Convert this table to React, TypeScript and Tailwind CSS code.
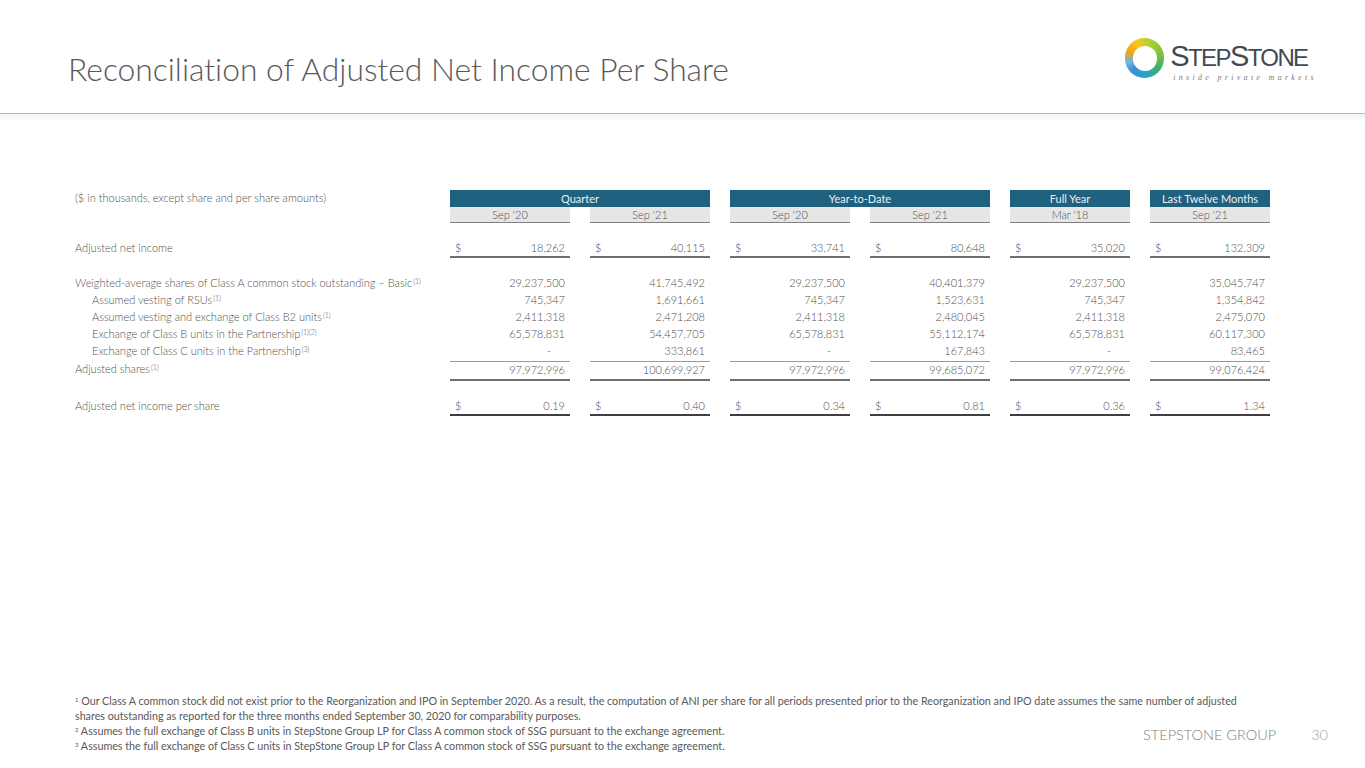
import React from "react";

type Row = {
  label: React.ReactNode;
  values: string[];
  indent?: boolean;
  dollar?: boolean;
  kind?: "plain" | "total" | "grand" | "final";
  height: string;
  top?: string;
};

const Sup = ({ children }: { children: React.ReactNode }) => (
  <sup className="text-[7px] ml-[1px]">{children}</sup>
);

const rows: Row[] = [
  {
    label: "Adjusted net income",
    values: ["18,262", "40,115", "33,741", "80,648", "35,020", "132,309"],
    dollar: true,
    kind: "grand",
    height: "h-[16px]",
    top: "mt-[16px]",
  },
  {
    label: (
      <>
        Weighted-average shares of Class A common stock outstanding – Basic<Sup>(1)</Sup>
      </>
    ),
    values: ["29,237,500", "41,745,492", "29,237,500", "40,401,379", "29,237,500", "35,045,747"],
    height: "h-[17px]",
    top: "mt-[17px]",
  },
  {
    label: (
      <>
        Assumed vesting of RSUs<Sup>(1)</Sup>
      </>
    ),
    values: ["745,347", "1,691,661", "745,347", "1,523,631", "745,347", "1,354,842"],
    indent: true,
    height: "h-[17px]",
  },
  {
    label: (
      <>
        Assumed vesting and exchange of Class B2 units<Sup>(1)</Sup>
      </>
    ),
    values: ["2,411,318", "2,471,208", "2,411,318", "2,480,045", "2,411,318", "2,475,070"],
    indent: true,
    height: "h-[17px]",
  },
  {
    label: (
      <>
        Exchange of Class B units in the Partnership<Sup>(1)(2)</Sup>
      </>
    ),
    values: ["65,578,831", "54,457,705", "65,578,831", "55,112,174", "65,578,831", "60,117,300"],
    indent: true,
    height: "h-[17px]",
  },
  {
    label: (
      <>
        Exchange of Class C units in the Partnership<Sup>(3)</Sup>
      </>
    ),
    values: ["-", "333,861", "-", "167,843", "-", "83,465"],
    indent: true,
    height: "h-[17px]",
  },
  {
    label: (
      <>
        Adjusted shares<Sup>(1)</Sup>
      </>
    ),
    values: ["97,972,996", "100,699,927", "97,972,996", "99,685,072", "97,972,996", "99,076,424"],
    kind: "total",
    height: "h-[17px]",
    top: "mt-[1px]",
  },
  {
    label: "Adjusted net income per share",
    values: ["0.19", "0.40", "0.34", "0.81", "0.36", "1.34"],
    dollar: true,
    kind: "final",
    height: "h-[15px]",
    top: "mt-[18px]",
  },
];

const grid = "grid grid-cols-[355px_repeat(6,120px)] gap-x-[20px]";

const cellBorder = (kind?: Row["kind"]) => {
  if (kind === "grand") return "border-b-2 border-[#707070]";
  if (kind === "total") return "border-t border-b-2 border-t-[#9a9a9a] border-b-[#6e6e6e]";
  if (kind === "final") return "border-b-2 border-[#3f3f3f]";
  return "";
};

const Logo = () => (
  <div className="flex items-start gap-[6px] pt-[38px]">
    <div className="w-[39px] h-[40px] rounded-full bg-[conic-gradient(from_10deg,#b9d232,#79bf43_20%,#3fae6a_32%,#2a9fd6_48%,#3e8fd0_60%,#6bb8e0_68%,#f3a31b_78%,#f6c61d_90%,#b9d232)] flex items-center justify-center">
      <div className="w-[24px] h-[25px] rounded-full bg-white ml-[1px]" />
    </div>
    <div className="flex flex-col">
      <div className="font-['Liberation_Sans',sans-serif] text-[#3e4b55] leading-none tracking-[-1.6px] pt-[4px] whitespace-nowrap">
        <span className="text-[29px]">S</span>
        <span className="text-[24px]">TEP</span>
        <span className="text-[29px]">S</span>
        <span className="text-[24px]">TONE</span>
      </div>
      <div className="font-['Liberation_Serif',serif] italic text-[8px] text-[#7a7a7a] tracking-[3.3px] leading-none mt-[3px] ml-[3px] whitespace-nowrap">
        inside private markets
      </div>
    </div>
  </div>
);

export default function App() {
  return (
    <div className="w-[1365px] h-[768px] bg-white flex flex-col overflow-hidden font-['Lato',sans-serif] text-[#595959] [font-variant-ligatures:none]">
      <header className="h-[113px] flex justify-between pl-[68px] pr-[48px]">
        <h1 className="pt-[54px] text-[31.8px] font-light leading-none text-[#595959] whitespace-nowrap">
          Reconciliation of Adjusted Net Income Per Share
        </h1>
        <Logo />
      </header>
      <div className="h-px bg-[#a9bdd0]" />
      <div className="h-[8px] bg-gradient-to-b from-[#eef3f7] to-white" />

      <main className="pl-[75px] pt-[68px] text-[11px] font-light text-[#4f4f4f]">
        <div className={`${grid} h-[17px] items-center`}>
          <div className="whitespace-nowrap">($ in thousands, except share and per share amounts)</div>
          <div className="col-span-2 h-full bg-[#20617f] text-[#e9f0f4] text-center leading-[17px] font-normal">Quarter</div>
          <div className="col-span-2 h-full bg-[#20617f] text-[#e9f0f4] text-center leading-[17px] font-normal">Year-to-Date</div>
          <div className="h-full bg-[#20617f] text-[#e9f0f4] text-center leading-[17px] font-normal">Full Year</div>
          <div className="h-full bg-[#20617f] text-[#e9f0f4] text-center leading-[17px] font-normal">Last Twelve Months</div>
        </div>
        <div className={`${grid} h-[16px]`}>
          <div />
          {["Sep '20", "Sep '21", "Sep '20", "Sep '21", "Mar '18", "Sep '21"].map((h, i) => (
            <div key={i} className="bg-[#e6e6e6] border-b border-[#7f7f7f] text-center leading-[15px]">
              {h}
            </div>
          ))}
        </div>

        {rows.map((r, ri) => (
          <div key={ri} className={`${grid} ${r.top ?? ""} ${ri === 0 ? "pt-[1px]" : ""}`}>
            <div className={`${r.height} flex items-center whitespace-nowrap ${r.indent ? "pl-[17px]" : ""}`}>
              <span>{r.label}</span>
            </div>
            {r.values.map((v, vi) => (
              <div
                key={vi}
                className={`${r.height} box-content flex items-center justify-between px-[5px] ${cellBorder(r.kind)}`}
              >
                <span>{r.dollar ? "$" : ""}</span>
                <span className={v === "-" ? "pr-[14px]" : ""}>{v}</span>
              </div>
            ))}
          </div>
        ))}
      </main>

      <footer className="mt-auto pl-[75px] pr-[37px] pb-[15px] text-[10.72px] leading-[15px] text-[#595959]">
        <div className="whitespace-nowrap">
          <sup className="text-[6px]">1</sup> Our Class A common stock did not exist prior to the Reorganization and IPO in September 2020. As a result, the computation of ANI per share for all periods presented prior to the Reorganization and IPO date assumes the same number of adjusted
          <br />
          shares outstanding as reported for the three months ended September 30, 2020 for comparability purposes.
        </div>
        <div className="flex justify-between items-center">
          <div className="whitespace-nowrap">
            <div>
              <sup className="text-[6px]">2</sup> Assumes the full exchange of Class B units in StepStone Group LP for Class A common stock of SSG pursuant to the exchange agreement.
            </div>
            <div>
              <sup className="text-[6px]">3</sup> Assumes the full exchange of Class C units in StepStone Group LP for Class A common stock of SSG pursuant to the exchange agreement.
            </div>
          </div>
          <div className="flex items-center gap-[35px] pb-[8px] text-[14.5px] font-light">
            <span className="text-[#808080]">STEPSTONE GROUP</span>
            <span className="text-[#a0a0a0]">30</span>
          </div>
        </div>
      </footer>
    </div>
  );
}
